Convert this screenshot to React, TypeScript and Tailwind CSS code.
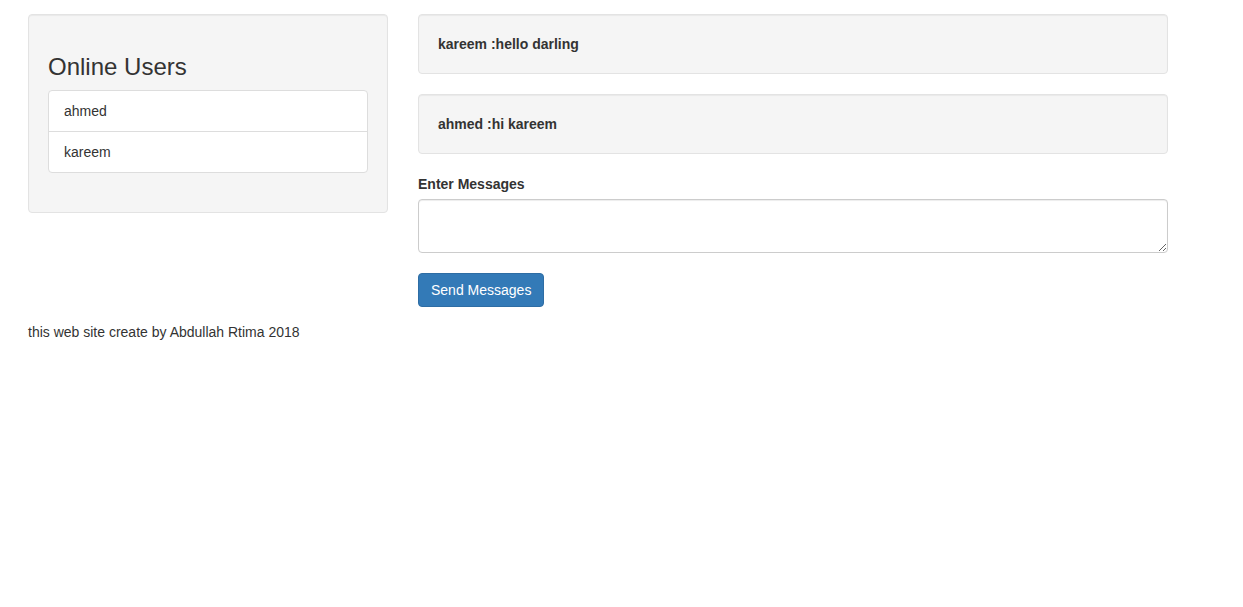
const users = ['ahmed', 'kareem']

const messages = [
  { from: 'kareem', text: 'hello darling' },
  { from: 'ahmed', text: 'hi kareem' },
]

export default function App() {
  return (
    <div className="min-h-screen bg-white pl-[28px] pt-[14px] text-[14px] leading-[20px] text-[#333] font-['Liberation_Sans',Arial,sans-serif]">
      <div className="flex gap-[30px] items-start">

        {/* Online users */}
        <div className="w-[360px] rounded-[4px] border border-[#e3e3e3] bg-[#f5f5f5] p-[19px] shadow-[inset_0_1px_1px_rgba(0,0,0,0.05)]">
          <h3 className="mt-[20px] mb-[10px] text-[24px] leading-[26.4px] font-medium">Online Users</h3>
          <ul className="mb-[20px] rounded-[4px] border border-[#ddd] bg-white">
            {users.map((u, i) => (
              <li
                key={u}
                className={'px-[15px] py-[10px] ' + (i > 0 ? 'border-t border-[#ddd]' : '')}
              >
                {u}
              </li>
            ))}
          </ul>
        </div>

        {/* Chat */}
        <div className="w-[750px]">
          {messages.map((m) => (
            <div
              key={m.from + m.text}
              className="mb-[20px] rounded-[4px] border border-[#e3e3e3] bg-[#f5f5f5] p-[19px] font-bold shadow-[inset_0_1px_1px_rgba(0,0,0,0.05)]"
            >
              {m.from} :{m.text}
            </div>
          ))}

          <label className="mb-[5px] block font-bold">Enter Messages</label>
          <textarea
            rows={2}
            className="block h-[54px] w-full rounded-[4px] border border-[#ccc] bg-white px-[12px] py-[6px] shadow-[inset_0_1px_1px_rgba(0,0,0,0.075)] outline-none"
          />
          <button className="mt-[20px] h-[34px] rounded-[4px] border border-[#2e6da4] bg-[#337ab7] px-[12px] text-white">
            Send Messages
          </button>
        </div>
      </div>

      <p className="mt-[15px]">this web site create by Abdullah Rtima 2018</p>
    </div>
  )
}
